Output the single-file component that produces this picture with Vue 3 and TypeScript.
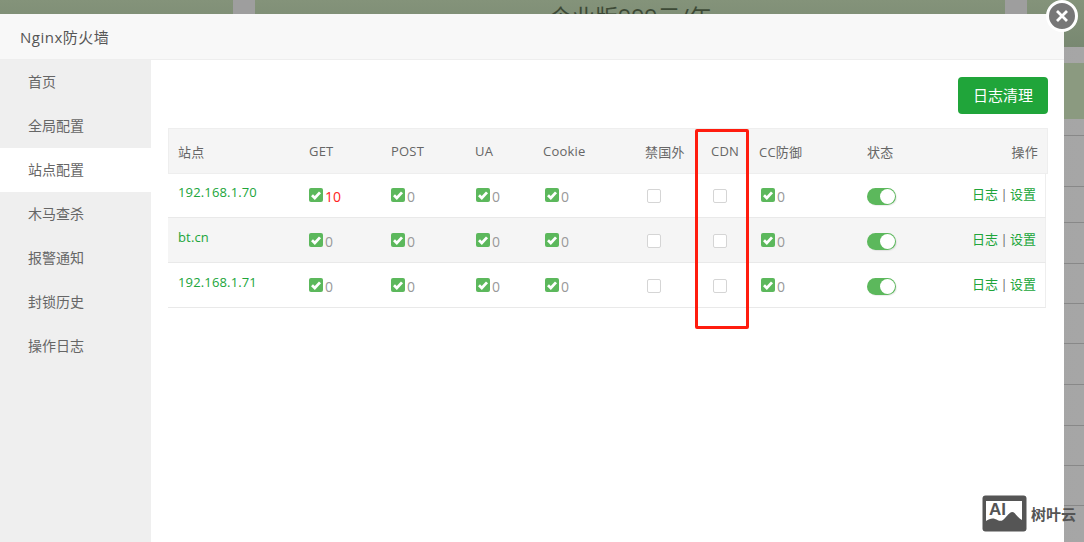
<script setup lang="ts">
interface Row {
  site: string
  get: number
}

const menu: string[] = ['首页', '全局配置', '站点配置', '木马查杀', '报警通知', '封锁历史', '操作日志']
const heads: string[] = ['站点', 'GET', 'POST', 'UA', 'Cookie', '禁国外', 'CDN', 'CC防御', '状态', '操作']
const rows: Row[] = [
  { site: '192.168.1.70', get: 10 },
  { site: 'bt.cn', get: 0 },
  { site: '192.168.1.71', get: 0 },
]
const stripes: number[] = [135, 186, 222, 263, 303, 343, 384, 425, 465, 505]
</script>

<template>
  <div class="page">
    <div class="backdrop" aria-hidden="true">
      <div class="band"></div>
      <div class="pillar p1"></div>
      <div class="pillar p2"></div>
      <div class="band-2"></div>
      <div v-for="s in stripes" :key="s" class="stripe" :style="{ top: s + 'px' }"></div>
      <div class="promo">企业版999元/年</div>
    </div>

    <section class="modal">
      <header class="title">Nginx防火墙</header>
      <div class="body">
        <nav class="side">
          <div v-for="(m, i) in menu" :key="m" class="item" :class="{ on: i === 2 }">{{ m }}</div>
        </nav>
        <main class="main">
          <div class="tools"><button class="clean">日志清理</button></div>
          <div class="table">
            <div class="row head">
              <div v-for="(h, i) in heads" :key="h" class="cell" :class="{ end: i === 9 }"><span>{{ h }}</span></div>
            </div>
            <div v-for="(r, ri) in rows" :key="r.site" class="row data" :class="{ alt: ri === 1 }">
              <div class="cell site">{{ r.site }}</div>
              <div class="cell rule">
                <span class="check"><svg viewBox="0 0 14 14"><path d="M3 7.2 5.8 9.9 11 4.4" /></svg></span><span class="num" :class="{ hot: r.get > 0 }">{{ r.get }}</span>
              </div>
              <div v-for="n in 3" :key="n" class="cell rule">
                <span class="check"><svg viewBox="0 0 14 14"><path d="M3 7.2 5.8 9.9 11 4.4" /></svg></span><span class="num">0</span>
              </div>
              <div class="cell box-cell"><span class="box"></span></div>
              <div class="cell box-cell"><span class="box"></span></div>
              <div class="cell rule">
                <span class="check"><svg viewBox="0 0 14 14"><path d="M3 7.2 5.8 9.9 11 4.4" /></svg></span><span class="num">0</span>
              </div>
              <div class="cell toggle-cell"><span class="toggle"><i></i></span></div>
              <div class="cell end links"><a>日志</a><span class="sep"> | </span><a>设置</a></div>
            </div>
          </div>
          <div class="mark"></div>
        </main>
      </div>
    </section>

    <button class="close" aria-label="关闭">
      <svg viewBox="0 0 26 26"><path d="M8 8 18 18M18 8 8 18" /></svg>
    </button>

    <div class="logo">
      <svg viewBox="0 0 45 37" class="logo-icon">
        <rect x="0.5" y="0.5" width="44" height="36" rx="3" fill="#555" />
        <rect x="4" y="6" width="36" height="24" fill="#fff" />
        <path d="M4 26c3-2 6-3 9-2 3 1 5 3 8 1 3-2 5-7 9-8 3 0 4 4 10 8v8H4z" fill="#555" />
      </svg>
      <span class="logo-ai">AI</span>
      <span class="logo-text">树叶云</span>
    </div>
  </div>
</template>

<style>
html, body { margin: 0; overflow: hidden; }
</style>

<style scoped>
.page {
  position: relative;
  width: 1084px;
  height: 542px;
  overflow: hidden;
  background: linear-gradient(90deg, #929292, #a6a6a6);
  font-family: "Open Sans", "Noto Sans CJK SC", sans-serif;
  font-size: 13px;
  color: #666;
}
.backdrop { position: absolute; inset: 0; }
.band { position: absolute; left: 0; right: 0; top: 0; height: 47px; background: linear-gradient(#84937a, #788871); }
.band-2 { position: absolute; left: 0; right: 0; top: 63px; height: 56px; background: #8b9a80; }
.stripe { position: absolute; left: 0; right: 0; height: 1px; background: #888; }
.pillar { position: absolute; top: 0; height: 47px; width: 22px; background: #9e9e9e; }
.p1 { left: 233px; }
.p2 { left: 1005px; }
.promo { position: absolute; left: 549px; top: 3px; font-size: 23px; line-height: 28px; color: #3d4a36; white-space: nowrap; }
.modal {
  position: absolute;
  left: 0;
  top: 14px;
  width: 1064px;
  height: 528px;
  background: #fff;
  display: flex;
  flex-direction: column;
}
.title {
  height: 45px;
  flex: none;
  line-height: 46px;
  padding-left: 20px;
  font-size: 15px;
  letter-spacing: 0.5px;
  color: #555;
  background: #f8f8f8;
  border-bottom: 1px solid #eee;
}
.body { flex: 1; display: flex; min-height: 0; }
.side { width: 151px; flex: none; background: #efefef; }
.item { height: 44px; line-height: 44px; padding-left: 28px; font-size: 14px; color: #666; }
.item.on { background: #fff; }
.main { position: relative; flex: 1; padding: 17px 16px 0 17px; }
.tools { display: flex; justify-content: flex-end; height: 37px; margin-bottom: 14px; }
.clean {
  width: 90px;
  height: 37px;
  border: 0;
  border-radius: 4px;
  background: #20a53a;
  color: #fff;
  font: inherit;
  font-size: 15px;
  padding: 0 0 2px;
}
.table { width: 880px; }
.row {
  display: grid;
  align-items: center;
}
.head {
  grid-template-columns: 131px 82px 84px 68px 102px 66px 48px 108px 1fr 92px;
  height: 44px;
  background: #f5f5f5;
  border: 1px solid #eee;
  font-size: 13px;
  letter-spacing: 0.2px;
  color: #666;
}
.head .cell { padding-left: 9px; }
.head .cell.end { padding: 0 9px 0 0; }
.data {
  grid-template-columns: 131px 82px 85px 69px 102px 66px 48px 106px 1fr 92px;
  width: 877px;
  height: 44px;
  border-bottom: 1px solid #e9e9e9;
  border-right: 1px solid #eee;
  box-sizing: content-box;
}
.head + .data { margin-top: -1px; }
.alt { background: #f5f5f5; }
.cell { padding-left: 10px; white-space: nowrap; }
.end { text-align: right; padding: 0 10px 0 0; }
.site { color: #20a53a; position: relative; top: -3px; letter-spacing: 0.15px; }
.rule { display: flex; align-items: center; }
.check {
  width: 14px;
  height: 14px;
  border-radius: 2px;
  background: #5cb85c;
  display: inline-flex;
  flex: none;
}
.check svg { width: 14px; height: 14px; }
.check path { fill: none; stroke: #fff; stroke-width: 2.8; }
.num { margin-left: 2px; color: #999; font-size: 14px; line-height: 14px; position: relative; top: 2px; }
.num.hot { color: #f22; }
.box-cell { display: flex; }
.box { width: 12px; height: 12px; border: 1px solid #d5d5d5; border-radius: 2px; background: #fff; position: relative; top: 1px; }
.toggle-cell { display: flex; }
.toggle {
  position: relative;
  top: 1px;
  display: block;
  width: 29px;
  height: 17px;
  border-radius: 9px;
  background: #5cb85c;
  box-shadow: 1px 1px 1px rgba(0, 0, 0, 0.08);
}
.toggle i {
  position: absolute;
  right: 1px;
  top: 1px;
  width: 15px;
  height: 15px;
  border-radius: 50%;
  background: #fff;
}
.links { padding-right: 9px; font-size: 13px; position: relative; top: -2px; }
.links a { color: #20a53a; }
.sep { color: #666; word-spacing: -1px; }
.mark {
  position: absolute;
  left: 544px;
  top: 69px;
  width: 48px;
  height: 194px;
  border: 3px solid #ff1c0e;
  border-radius: 2px;
  pointer-events: none;
}
.close {
  position: absolute;
  left: 1046px;
  top: 0;
  width: 32px;
  height: 32px;
  padding: 0;
  box-sizing: border-box;
  border: 3px solid #fff;
  border-radius: 50%;
  background: #777;
  display: block;
}
.close svg { display: block; width: 26px; height: 26px; }
.close path { stroke: #fff; stroke-width: 2.8; fill: none; }
.logo {
  position: absolute;
  left: 982px;
  top: 495px;
  display: flex;
  align-items: center;
  height: 37px;
}
.logo-icon { width: 45px; height: 37px; display: block; }
.logo-ai {
  position: absolute;
  left: 7px;
  top: 3px;
  font-family: "Liberation Sans", sans-serif;
  font-weight: 700;
  font-size: 17px;
  line-height: 24px;
  color: #555;
}
.logo-text { margin-left: 4px; font-size: 15px; font-weight: 700; color: #555; }
</style>
